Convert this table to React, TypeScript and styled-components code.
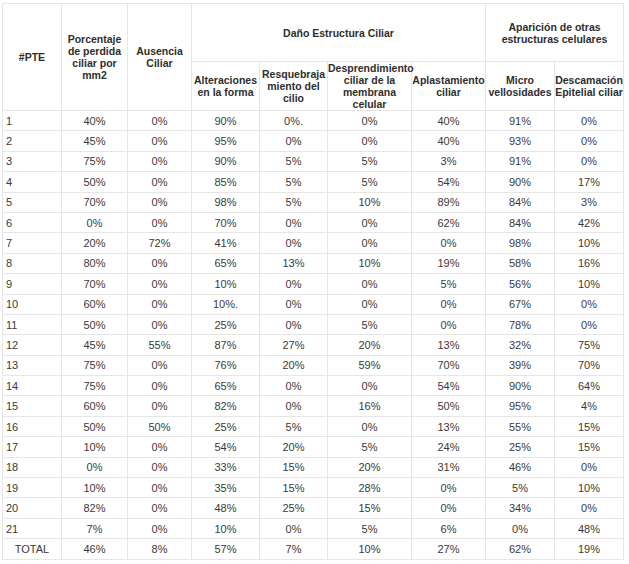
import React from 'react';
import styled, { createGlobalStyle } from 'styled-components';

const GlobalStyle = createGlobalStyle`
  html, body {
    margin: 0;
    padding: 0;
    background: #ffffff;
  }
  body {
    font-family: "Liberation Sans", Arial, sans-serif;
    color: #333333;
  }
`;

const Page = styled.div`
  padding: 3px 0 0 2px;
`;

const Table = styled.table`
  border-collapse: collapse;
  table-layout: fixed;
  width: 622px;
`;

const HeadRow = styled.tr<{ $h: number }>`
  height: ${(p) => p.$h}px;
`;

const HeadCell = styled.th`
  border: 1px solid #e6e6e6;
  font-size: 10.5px;
  line-height: 12px;
  font-weight: bold;
  color: #2e2e2e;
  text-align: center;
  vertical-align: middle;
  padding: 0;
  white-space: nowrap;
`;

const Row = styled.tr`
  height: 20.4px;
`;

const Cell = styled.td<{ $left?: boolean }>`
  border: 1px solid #e6e6e6;
  font-size: 11px;
  color: #3a3a3a;
  text-align: ${(p) => (p.$left ? 'left' : 'center')};
  padding: ${(p) => (p.$left ? '0 0 0 3px' : '0')};
  vertical-align: middle;
  white-space: nowrap;
`;

const widths = [59, 66, 64, 68, 68, 84, 74, 69, 69];

const rows: string[][] = [
  ['1', '40%', '0%', '90%', '0%.', '0%', '40%', '91%', '0%'],
  ['2', '45%', '0%', '95%', '0%', '0%', '40%', '93%', '0%'],
  ['3', '75%', '0%', '90%', '5%', '5%', '3%', '91%', '0%'],
  ['4', '50%', '0%', '85%', '5%', '5%', '54%', '90%', '17%'],
  ['5', '70%', '0%', '98%', '5%', '10%', '89%', '84%', '3%'],
  ['6', '0%', '0%', '70%', '0%', '0%', '62%', '84%', '42%'],
  ['7', '20%', '72%', '41%', '0%', '0%', '0%', '98%', '10%'],
  ['8', '80%', '0%', '65%', '13%', '10%', '19%', '58%', '16%'],
  ['9', '70%', '0%', '10%', '0%', '0%', '5%', '56%', '10%'],
  ['10', '60%', '0%', '10%.', '0%', '0%', '0%', '67%', '0%'],
  ['11', '50%', '0%', '25%', '0%', '5%', '0%', '78%', '0%'],
  ['12', '45%', '55%', '87%', '27%', '20%', '13%', '32%', '75%'],
  ['13', '75%', '0%', '76%', '20%', '59%', '70%', '39%', '70%'],
  ['14', '75%', '0%', '65%', '0%', '0%', '54%', '90%', '64%'],
  ['15', '60%', '0%', '82%', '0%', '16%', '50%', '95%', '4%'],
  ['16', '50%', '50%', '25%', '5%', '0%', '13%', '55%', '15%'],
  ['17', '10%', '0%', '54%', '20%', '5%', '24%', '25%', '15%'],
  ['18', '0%', '0%', '33%', '15%', '20%', '31%', '46%', '0%'],
  ['19', '10%', '0%', '35%', '15%', '28%', '0%', '5%', '10%'],
  ['20', '82%', '0%', '48%', '25%', '15%', '0%', '34%', '0%'],
  ['21', '7%', '0%', '10%', '0%', '5%', '6%', '0%', '48%'],
];

const total = ['TOTAL', '46%', '8%', '57%', '7%', '10%', '27%', '62%', '19%'];

export default function App() {
  return (
    <>
      <GlobalStyle />
      <Page>
        <Table>
          <colgroup>
            {widths.map((w, i) => (
              <col key={i} style={{ width: w }} />
            ))}
          </colgroup>
          <thead>
            <HeadRow $h={58}>
              <HeadCell rowSpan={2}>#PTE</HeadCell>
              <HeadCell rowSpan={2}>
                Porcentaje<br />de perdida<br />ciliar por<br />mm2
              </HeadCell>
              <HeadCell rowSpan={2}>
                Ausencia<br />Ciliar
              </HeadCell>
              <HeadCell colSpan={4}>Daño Estructura Ciliar</HeadCell>
              <HeadCell colSpan={2}>
                Aparición de otras<br />estructuras celulares
              </HeadCell>
            </HeadRow>
            <HeadRow $h={49}>
              <HeadCell>
                Alteraciones<br />en la forma
              </HeadCell>
              <HeadCell>
                Resquebraja<br />miento del<br />cilio
              </HeadCell>
              <HeadCell>
                Desprendimiento<br />ciliar de la<br />membrana<br />celular
              </HeadCell>
              <HeadCell>
                Aplastamiento<br />ciliar
              </HeadCell>
              <HeadCell>
                Micro<br />vellosidades
              </HeadCell>
              <HeadCell>
                Descamación<br />Epitelial ciliar
              </HeadCell>
            </HeadRow>
          </thead>
          <tbody>
            {rows.map((r) => (
              <Row key={r[0]}>
                {r.map((v, i) => (
                  <Cell key={i} $left={i === 0}>
                    {v}
                  </Cell>
                ))}
              </Row>
            ))}
            <Row>
              {total.map((v, i) => (
                <Cell key={i}>{v}</Cell>
              ))}
            </Row>
          </tbody>
        </Table>
      </Page>
    </>
  );
}
